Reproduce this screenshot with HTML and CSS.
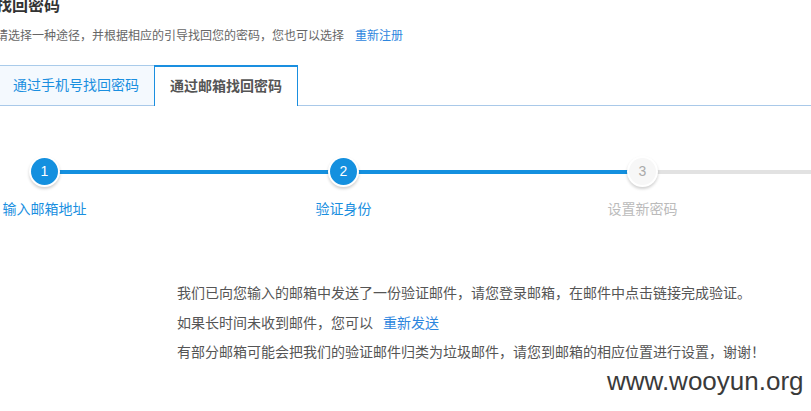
FILE: index.html
```html
<!DOCTYPE html>
<html lang="zh-CN">
<head>
<meta charset="utf-8">
<title>找回密码</title>
<link rel="stylesheet" href="styles.css">
</head>
<body>
<div class="page">
  <h1 class="title">找回密码</h1>
  <p class="subtitle">请选择一种途径，并根据相应的引导找回您的密码，您也可以选择<a class="link reg" href="#">重新注册</a></p>

  <div class="tabs">
    <div class="tab">通过手机号找回密码</div>
    <div class="tab active">通过邮箱找回密码</div>
  </div>

  <div class="steps">
    <div class="step done">
      <div class="circle">1</div>
      <div class="label">输入邮箱地址</div>
    </div>
    <div class="step done">
      <div class="circle">2</div>
      <div class="label">验证身份</div>
    </div>
    <div class="step todo">
      <div class="circle">3</div>
      <div class="label">设置新密码</div>
    </div>
  </div>

  <div class="message">
    <p>我们已向您输入的邮箱中发送了一份验证邮件，请您登录邮箱，在邮件中点击链接完成验证。</p>
    <p>如果长时间未收到邮件，您可以<a class="link resend" href="#">重新发送</a></p>
    <p>有部分邮箱可能会把我们的验证邮件归类为垃圾邮件，请您到邮箱的相应位置进行设置，谢谢！</p>
  </div>
</div>
<div class="watermark">www.wooyun.org</div>
</body>
</html>
```

FILE: styles.css
```css
html, body {
  margin: 0;
  padding: 0;
  overflow: hidden;
  background: #fff;
}
body {
  width: 811px;
  height: 411px;
  position: relative;
  font-family: "Liberation Sans", "Noto Sans CJK SC", sans-serif;
  color: #555;
}
.page {
  margin-left: -4px;
}
.title {
  margin: -2px 0 0 0;
  font-size: 16px;
  line-height: 16px;
  font-weight: bold;
  color: #333;
}
.subtitle {
  margin: 12px 0 0 0;
  font-size: 12px;
  line-height: 20px;
  color: #666;
}
.link {
  color: #2d86de;
  text-decoration: none;
}
.reg {
  margin-left: 11px;
}
.tabs {
  margin-top: 19px;
  display: flex;
  height: 40px;
  border-bottom: 1px solid #a9c9e9;
}
.tab {
  box-sizing: border-box;
  height: 40px;
  padding: 0 15px 0 17px;
  font-size: 14px;
  line-height: 38px;
  color: #1a8fe0;
  background: #f4f9fe;
  border-top: 1px solid #a9cbea;
}
.tab.active {
  height: 41px;
  margin-bottom: -1px;
  padding: 0 15px 0 15px;
  color: #555;
  font-weight: bold;
  background: #fff;
  border-top: 2px solid #1a8fe0;
  border-left: 1px solid #1a8fe0;
  border-right: 1px solid #1a8fe0;
  line-height: 39px;
}
.steps {
  display: flex;
  margin-left: -101px;
  padding-top: 52px;
}
.step {
  position: relative;
  width: 299px;
  flex: none;
  display: flex;
  flex-direction: column;
  align-items: center;
}
.step::after {
  content: "";
  position: absolute;
  left: 50%;
  top: 12px;
  width: 100%;
  height: 4px;
  background: #1490df;
}
.step.todo::after {
  background: #e2e2e2;
}
.circle {
  position: relative;
  z-index: 1;
  width: 27px;
  height: 27px;
  border-radius: 50%;
  background: #1490df;
  color: #fff;
  font-size: 14px;
  line-height: 27px;
  text-align: center;
  box-shadow: 0 0 0 2px #fff, 0 2px 3px 2px rgba(0, 0, 0, 0.18);
}
.todo .circle {
  background: #f7f7f7;
  color: #aaa;
}
.label {
  margin-top: 14px;
  font-size: 14px;
  line-height: 20px;
  color: #1a8fdf;
  white-space: nowrap;
}
.todo .label {
  color: #bbb;
}
.message {
  margin: 60px 0 0 181px;
  font-size: 14px;
  line-height: 29.5px;
  color: #555;
}
.message p {
  margin: 0;
  white-space: nowrap;
}
.resend {
  margin-left: 10px;
}
.watermark {
  position: absolute;
  left: 607px;
  top: 366px;
  font-family: "Liberation Sans", sans-serif;
  font-size: 26px;
  line-height: 30px;
  color: #3a3a3a;
}
```
